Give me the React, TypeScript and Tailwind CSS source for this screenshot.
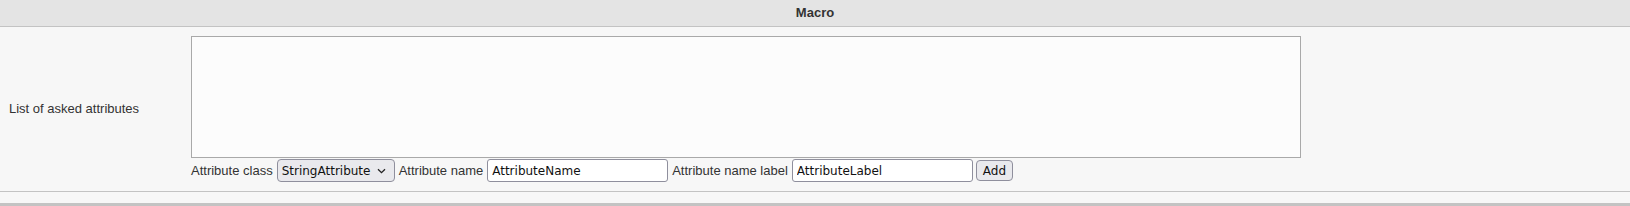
import React from 'react';

export default function App() {
  return (
    <div className="w-[1630px] h-[206px] bg-[#f7f7f7] font-['Liberation_Sans',Arial,sans-serif] text-[13px] text-[#333]">
      {/* Header */}
      <div className="h-[27px] bg-[#e4e4e4] border-b border-[#c3c3c3] flex items-center justify-center font-bold">
        Macro
      </div>

      {/* Row */}
      <div className="flex border-b border-[#c3c3c3] h-[165px]">
        <div className="w-[191px] pl-[9px] flex items-center">List of asked attributes</div>
        <div className="flex-1 pt-[9px]">
          <textarea className="block w-[1110px] h-[122px] bg-[#fcfcfc] border border-[#a9a9a9] resize-none outline-none" />
          <div className="flex items-center gap-[4px] h-[25px] whitespace-nowrap">
            <span>Attribute class</span>
            <div className="h-[23px] w-[118px] rounded-[4px] border border-[#8f8f9d] bg-[#e9e9ed] flex items-center justify-between pl-[4px] pr-[8px] font-['DejaVu_Sans',sans-serif] text-[12px] text-[#111]">
              <span>StringAttribute</span>
              <svg width="9" height="6" viewBox="0 0 9 6" fill="none">
                <path d="M1 1.2 4.5 4.6 8 1.2" stroke="#222" strokeWidth="1.3" />
              </svg>
            </div>
            <span>Attribute name</span>
            <input
              defaultValue="AttributeName"
              className="h-[23px] w-[181px] rounded-[3px] border border-[#8f8f9d] bg-white px-[4px] font-['DejaVu_Sans',sans-serif] text-[12px] text-[#111] outline-none"
            />
            <span>Attribute name label</span>
            <input
              defaultValue="AttributeLabel"
              className="h-[23px] w-[181px] rounded-[3px] border border-[#8f8f9d] bg-white px-[4px] font-['DejaVu_Sans',sans-serif] text-[12px] text-[#111] outline-none"
            />
            <button className="h-[21px] px-[6px] -ml-[1px] rounded-[4px] border border-[#8f8f9d] bg-[#e9e9ed] font-['DejaVu_Sans',sans-serif] text-[12px] text-[#111] leading-none">
              Add
            </button>
          </div>
        </div>
      </div>

      <div className="h-[11px]" />
      <div className="h-[3px] bg-[#c3c3c3]" />
    </div>
  );
}
